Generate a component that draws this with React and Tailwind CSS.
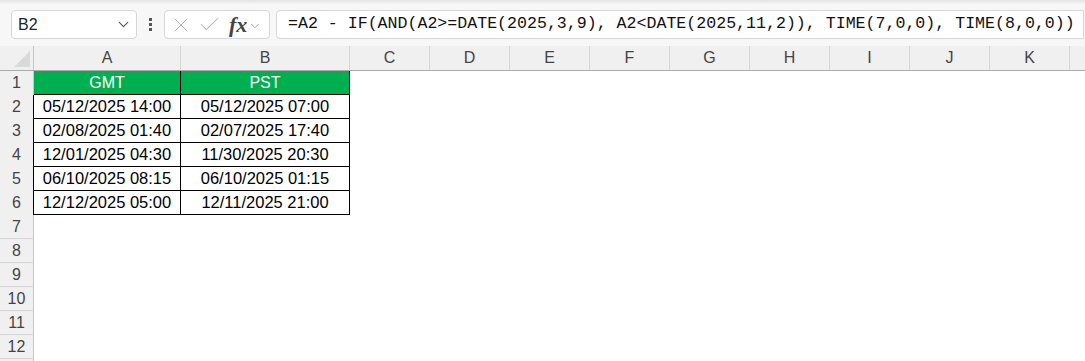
import { ChevronDown, X, Check } from 'lucide-react';

const cols = ['C', 'D', 'E', 'F', 'G', 'H', 'I', 'J', 'K'];

const data = [
  ['05/12/2025 14:00', '05/12/2025 07:00'],
  ['02/08/2025 01:40', '02/07/2025 17:40'],
  ['12/01/2025 04:30', '11/30/2025 20:30'],
  ['06/10/2025 08:15', '06/10/2025 01:15'],
  ['12/12/2025 05:00', '12/11/2025 21:00'],
];

const formula = '=A2 - IF(AND(A2>=DATE(2025,3,9), A2<DATE(2025,11,2)), TIME(7,0,0), TIME(8,0,0))';

function RowHead({ n, dark }) {
  return (
    <div
      className={`flex h-full w-[34px] shrink-0 items-center justify-center border-r bg-[#f0f0f0] text-[16px] text-[#444] ${
        dark ? 'border-r-black' : 'border-r-[#c6c6c6]'
      }`}
    >
      {n}
    </div>
  );
}

export default function App() {
  return (
    <div className="h-[361px] w-[1085px] overflow-hidden bg-white font-['Liberation_Sans',Arial,sans-serif]">
      {/* formula toolbar */}
      <div className="h-[46px] bg-[#f7f7f7] bg-gradient-to-b from-[#e4e4e4] via-[#f7f7f7] via-[10%] to-[#f7f7f7] pt-[10px]">
        <div className="flex h-[29px] items-stretch">
          <div className="ml-[11px] flex w-[126px] items-center justify-between rounded-[4px] border border-[#d6d6d6] bg-white pl-[6px] pr-[4px]">
            <span className="text-[16px] text-[#222]">B2</span>
            <ChevronDown size={17} strokeWidth={1.6} className="text-[#555]" />
          </div>
          <div className="flex w-[27px] flex-col items-center justify-center gap-[2px]">
            <span className="h-[3px] w-[3px] bg-[#555]" />
            <span className="h-[3px] w-[3px] bg-[#555]" />
            <span className="h-[3px] w-[3px] bg-[#555]" />
          </div>
          <div className="flex w-[106px] items-center rounded-[4px] border border-[#d6d6d6] bg-white pl-[4px]">
            <X size={24} strokeWidth={1} className="text-[#b4b4b4]" />
            <Check size={25} strokeWidth={1} className="ml-[4px] text-[#b4b4b4]" />
            <span className="ml-[7px] font-['Liberation_Serif',serif] text-[22px] italic font-semibold leading-none text-[#444]">
              fx
            </span>
            <ChevronDown size={14} strokeWidth={1.3} className="ml-[1px] mt-[2px] text-[#888]" />
          </div>
          <div className="ml-[6px] flex w-[808px] items-center rounded-l-[4px] border border-[#d6d6d6] bg-white pl-[11px]">
            <span className="whitespace-pre font-['Liberation_Mono',monospace] text-[16.6px] text-[#111]">{formula}</span>
          </div>
        </div>
      </div>

      {/* column headers */}
      <div className="flex h-[25px] border-b border-b-[#ababab] bg-[#f0f0f0] text-[16px] text-[#444]">
        <div className="relative w-[34px] shrink-0 border-r border-r-[#c6c6c6]">
          <div className="absolute bottom-[3px] right-[3px] h-0 w-0 border-b-[16px] border-l-[16px] border-b-[#d9d9d9] border-l-transparent" />
        </div>
        <div className="flex w-[147px] shrink-0 items-center justify-center border-r border-r-[#d6d6d6]">A</div>
        <div className="flex w-[169px] shrink-0 items-center justify-center border-r border-r-[#d6d6d6]">B</div>
        {cols.map((c) => (
          <div key={c} className="flex w-[80px] shrink-0 items-center justify-center border-r border-r-[#d6d6d6]">
            {c}
          </div>
        ))}
      </div>

      {/* row 1 */}
      <div className="flex h-[24px]">
        <RowHead n={1} />
        <div className="flex w-[147px] shrink-0 items-center justify-center border-b border-r border-black bg-[#00b050] text-[16px] text-white">
          GMT
        </div>
        <div className="flex w-[169px] shrink-0 items-center justify-center border-b border-r border-black bg-[#00b050] text-[16px] text-white">
          PST
        </div>
      </div>

      {data.map((row, i) => (
        <div key={i} className="flex h-[24px]">
          <RowHead n={i + 2} dark />
          <div className="flex w-[147px] shrink-0 items-center justify-center border-b border-r border-black text-[16.5px] text-black">
            {row[0]}
          </div>
          <div className="flex w-[169px] shrink-0 items-center justify-center border-b border-r border-black text-[16.5px] text-black">
            {row[1]}
          </div>
        </div>
      ))}

      {[7, 8, 9, 10, 11, 12, ''].map((n, i) => (
        <div key={i} className="flex h-[24px]">
          <div className="flex h-full w-[34px] shrink-0 items-center justify-center border-b border-r border-b-[#d6d6d6] border-r-[#c6c6c6] bg-[#f0f0f0] text-[16px] text-[#444]">
            {n}
          </div>
        </div>
      ))}
    </div>
  );
}
